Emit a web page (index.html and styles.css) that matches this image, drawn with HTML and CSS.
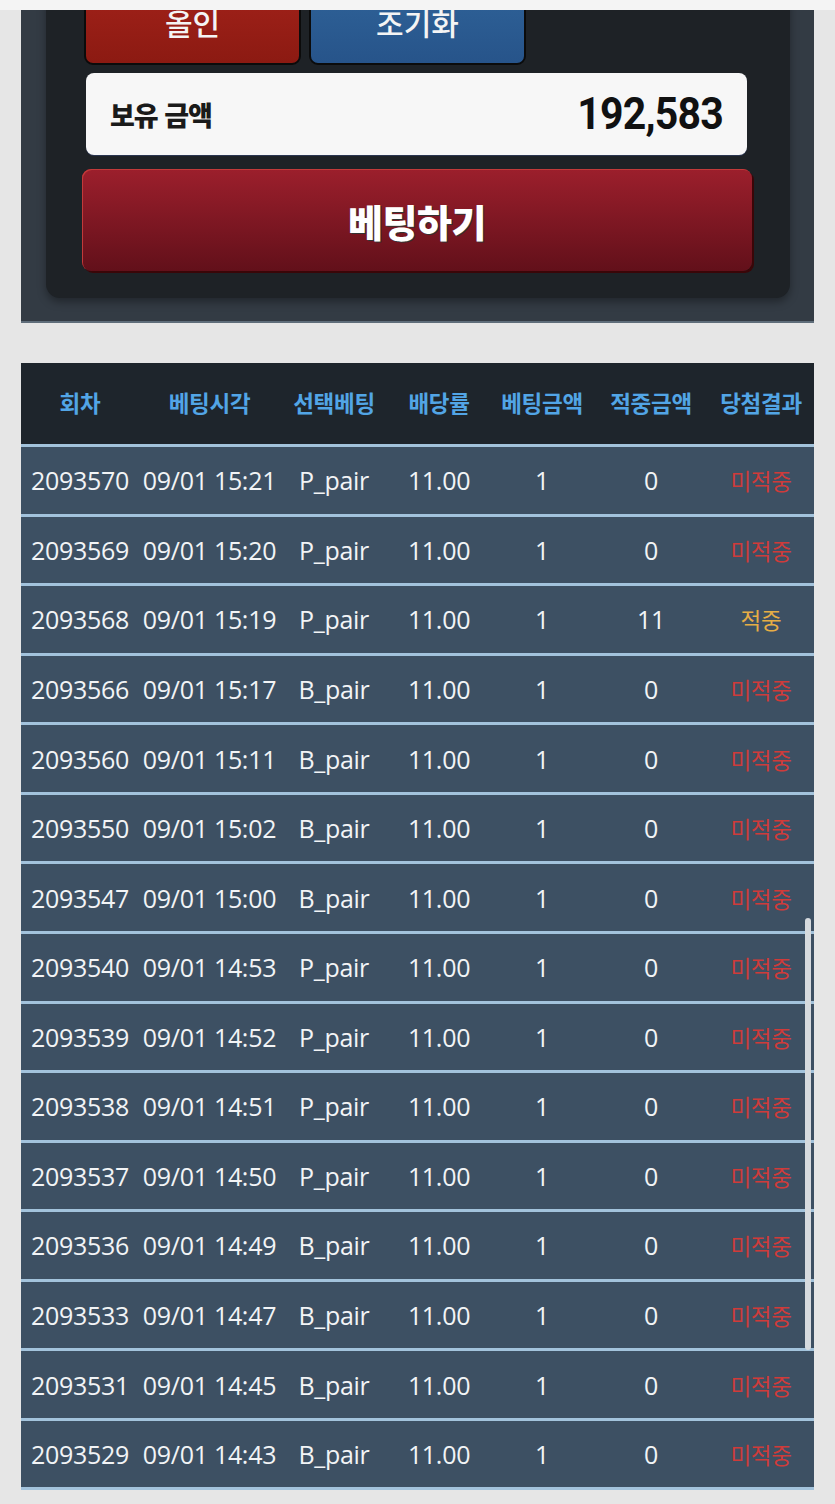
FILE: index.html
```html
<!DOCTYPE html>
<html lang="ko">
<head>
<meta charset="utf-8">
<title>베팅</title>
<link rel="stylesheet" href="styles.css">
</head>
<body>
<div class="strip"></div>
<section class="panel">
  <div class="card">
    <div class="quick">
      <button class="qbtn red">올인</button>
      <button class="qbtn blue">조기화</button>
    </div>
    <div class="balance">
      <span class="bal-label">보유 금액</span>
      <span class="bal-value">192,583</span>
    </div>
    <button class="bet">베팅하기</button>
  </div>
</section>

<section class="table">
  <div class="row head">
    <div>회차</div><div>베팅시각</div><div>선택베팅</div><div>배당률</div><div>베팅금액</div><div>적중금액</div><div>당첨결과</div>
  </div>
  <div class="row"><div>2093570</div><div>09/01 15:21</div><div>P_pair</div><div>11.00</div><div>1</div><div>0</div><div class="lose">미적중</div></div>
  <div class="row"><div>2093569</div><div>09/01 15:20</div><div>P_pair</div><div>11.00</div><div>1</div><div>0</div><div class="lose">미적중</div></div>
  <div class="row"><div>2093568</div><div>09/01 15:19</div><div>P_pair</div><div>11.00</div><div>1</div><div>11</div><div class="win">적중</div></div>
  <div class="row"><div>2093566</div><div>09/01 15:17</div><div>B_pair</div><div>11.00</div><div>1</div><div>0</div><div class="lose">미적중</div></div>
  <div class="row"><div>2093560</div><div>09/01 15:11</div><div>B_pair</div><div>11.00</div><div>1</div><div>0</div><div class="lose">미적중</div></div>
  <div class="row"><div>2093550</div><div>09/01 15:02</div><div>B_pair</div><div>11.00</div><div>1</div><div>0</div><div class="lose">미적중</div></div>
  <div class="row"><div>2093547</div><div>09/01 15:00</div><div>B_pair</div><div>11.00</div><div>1</div><div>0</div><div class="lose">미적중</div></div>
  <div class="row"><div>2093540</div><div>09/01 14:53</div><div>P_pair</div><div>11.00</div><div>1</div><div>0</div><div class="lose">미적중</div></div>
  <div class="row"><div>2093539</div><div>09/01 14:52</div><div>P_pair</div><div>11.00</div><div>1</div><div>0</div><div class="lose">미적중</div></div>
  <div class="row"><div>2093538</div><div>09/01 14:51</div><div>P_pair</div><div>11.00</div><div>1</div><div>0</div><div class="lose">미적중</div></div>
  <div class="row"><div>2093537</div><div>09/01 14:50</div><div>P_pair</div><div>11.00</div><div>1</div><div>0</div><div class="lose">미적중</div></div>
  <div class="row"><div>2093536</div><div>09/01 14:49</div><div>B_pair</div><div>11.00</div><div>1</div><div>0</div><div class="lose">미적중</div></div>
  <div class="row"><div>2093533</div><div>09/01 14:47</div><div>B_pair</div><div>11.00</div><div>1</div><div>0</div><div class="lose">미적중</div></div>
  <div class="row"><div>2093531</div><div>09/01 14:45</div><div>B_pair</div><div>11.00</div><div>1</div><div>0</div><div class="lose">미적중</div></div>
  <div class="row"><div>2093529</div><div>09/01 14:43</div><div>B_pair</div><div>11.00</div><div>1</div><div>0</div><div class="lose">미적중</div></div>
  <div class="scrollbar"></div>
</section>
</body>
</html>
```
FILE: styles.css
```css
html, body {
  margin: 0;
  padding: 0;
}
body {
  background: #e6e6e6;
  font-family: "Open Sans", "Noto Sans CJK KR", sans-serif;
  height: 1504px;
  overflow: hidden;
}
.strip {
  height: 10px;
  background: #f4f4f4;
  position: relative;
  z-index: 2;
}
.panel {
  margin: 0 21px;
  background: #333b44;
  padding: 0 24px 23px 25px;
  border-bottom: 2px solid #5f6d7a;
  overflow: hidden;
}
.card {
  margin-top: -45px;
  background: #1e2226;
  border-radius: 0 0 14px 14px;
  padding: 14px 38px 27px 36px;
  box-shadow: 0 4px 8px rgba(0,0,0,0.35);
}
.quick {
  display: flex;
  gap: 8px;
  padding-left: 2px;
}
.qbtn {
  width: 217px;
  height: 86px;
  border: 2px solid #0b0b0b;
  border-radius: 9px;
  color: #f4f4f4;
  font-family: "Noto Sans CJK KR", sans-serif;
  font-size: 30px;
  font-weight: 500;
  padding: 0;
  line-height: 1;
}
.qbtn.red {
  background: linear-gradient(#a3221a, #8c1a12);
}
.qbtn.blue {
  background: linear-gradient(#2f6399, #27548a);
}
.balance {
  margin: 8px 5px 0 4px;
  height: 82px;
  background: #f7f7f7;
  border-radius: 8px;
  display: flex;
  align-items: center;
  justify-content: space-between;
  padding: 0 24px;
  box-sizing: border-box;
  box-shadow: 0 1px 0 #2a3550;
}
.bal-label {
  font-family: "Noto Sans CJK KR", sans-serif;
  font-weight: 900;
  font-size: 27px;
  color: #1a1a1a;
  letter-spacing: -1px;
}
.bal-value {
  font-family: Roboto, "Noto Sans", sans-serif;
  font-weight: 700;
  font-size: 41px;
  color: #111;
  letter-spacing: -0.8px;
  transform: scaleY(1.06);
}
.bet {
  display: block;
  width: 100%;
  margin-top: 14px;
  height: 102px;
  border: 0;
  border-radius: 9px;
  background: linear-gradient(#9c1f2c, #62101a);
  box-shadow: inset 1px 1px 0 #c23a3a, 2px 2px 0 #3a0608;
  color: #ffffff;
  font-family: "Noto Sans CJK KR", sans-serif;
  font-weight: 900;
  font-size: 38px;
  letter-spacing: -0.5px;
  text-shadow: 1px 1px 0 #333;
}
.table {
  position: relative;
  margin: 40px 21px 0;
  background: #3d5063;
}
.row {
  display: grid;
  grid-template-columns: 118px 141px 108px 102px 104px 114px 106px;
  height: 66.57px;
  border-bottom: 3px solid #a3c3dc;
  align-items: center;
  text-align: center;
  color: #f2f4f6;
  font-size: 25px;
  white-space: nowrap;
}
.row > div {
  display: flex;
  justify-content: center;
  letter-spacing: -0.3px;
}
.row.head {
  height: 81px;
  background: #1e252c;
  color: #52a5e6;
  font-family: "Noto Sans CJK KR", sans-serif;
  font-weight: 700;
  font-size: 22.5px;
}
.row.head > div {
  letter-spacing: -0.3px;
  margin-top: -3px;
}
.lose {
  color: #cf3b3a;
  font-family: "Noto Sans CJK KR", sans-serif;
  font-size: 22.5px;
}
.win {
  color: #e6ad45;
  font-family: "Noto Sans CJK KR", sans-serif;
  font-size: 22.5px;
}
.scrollbar {
  position: absolute;
  right: 3px;
  top: 555px;
  width: 6px;
  height: 432px;
  border-radius: 3px;
  background: #d6dade;
}
```
